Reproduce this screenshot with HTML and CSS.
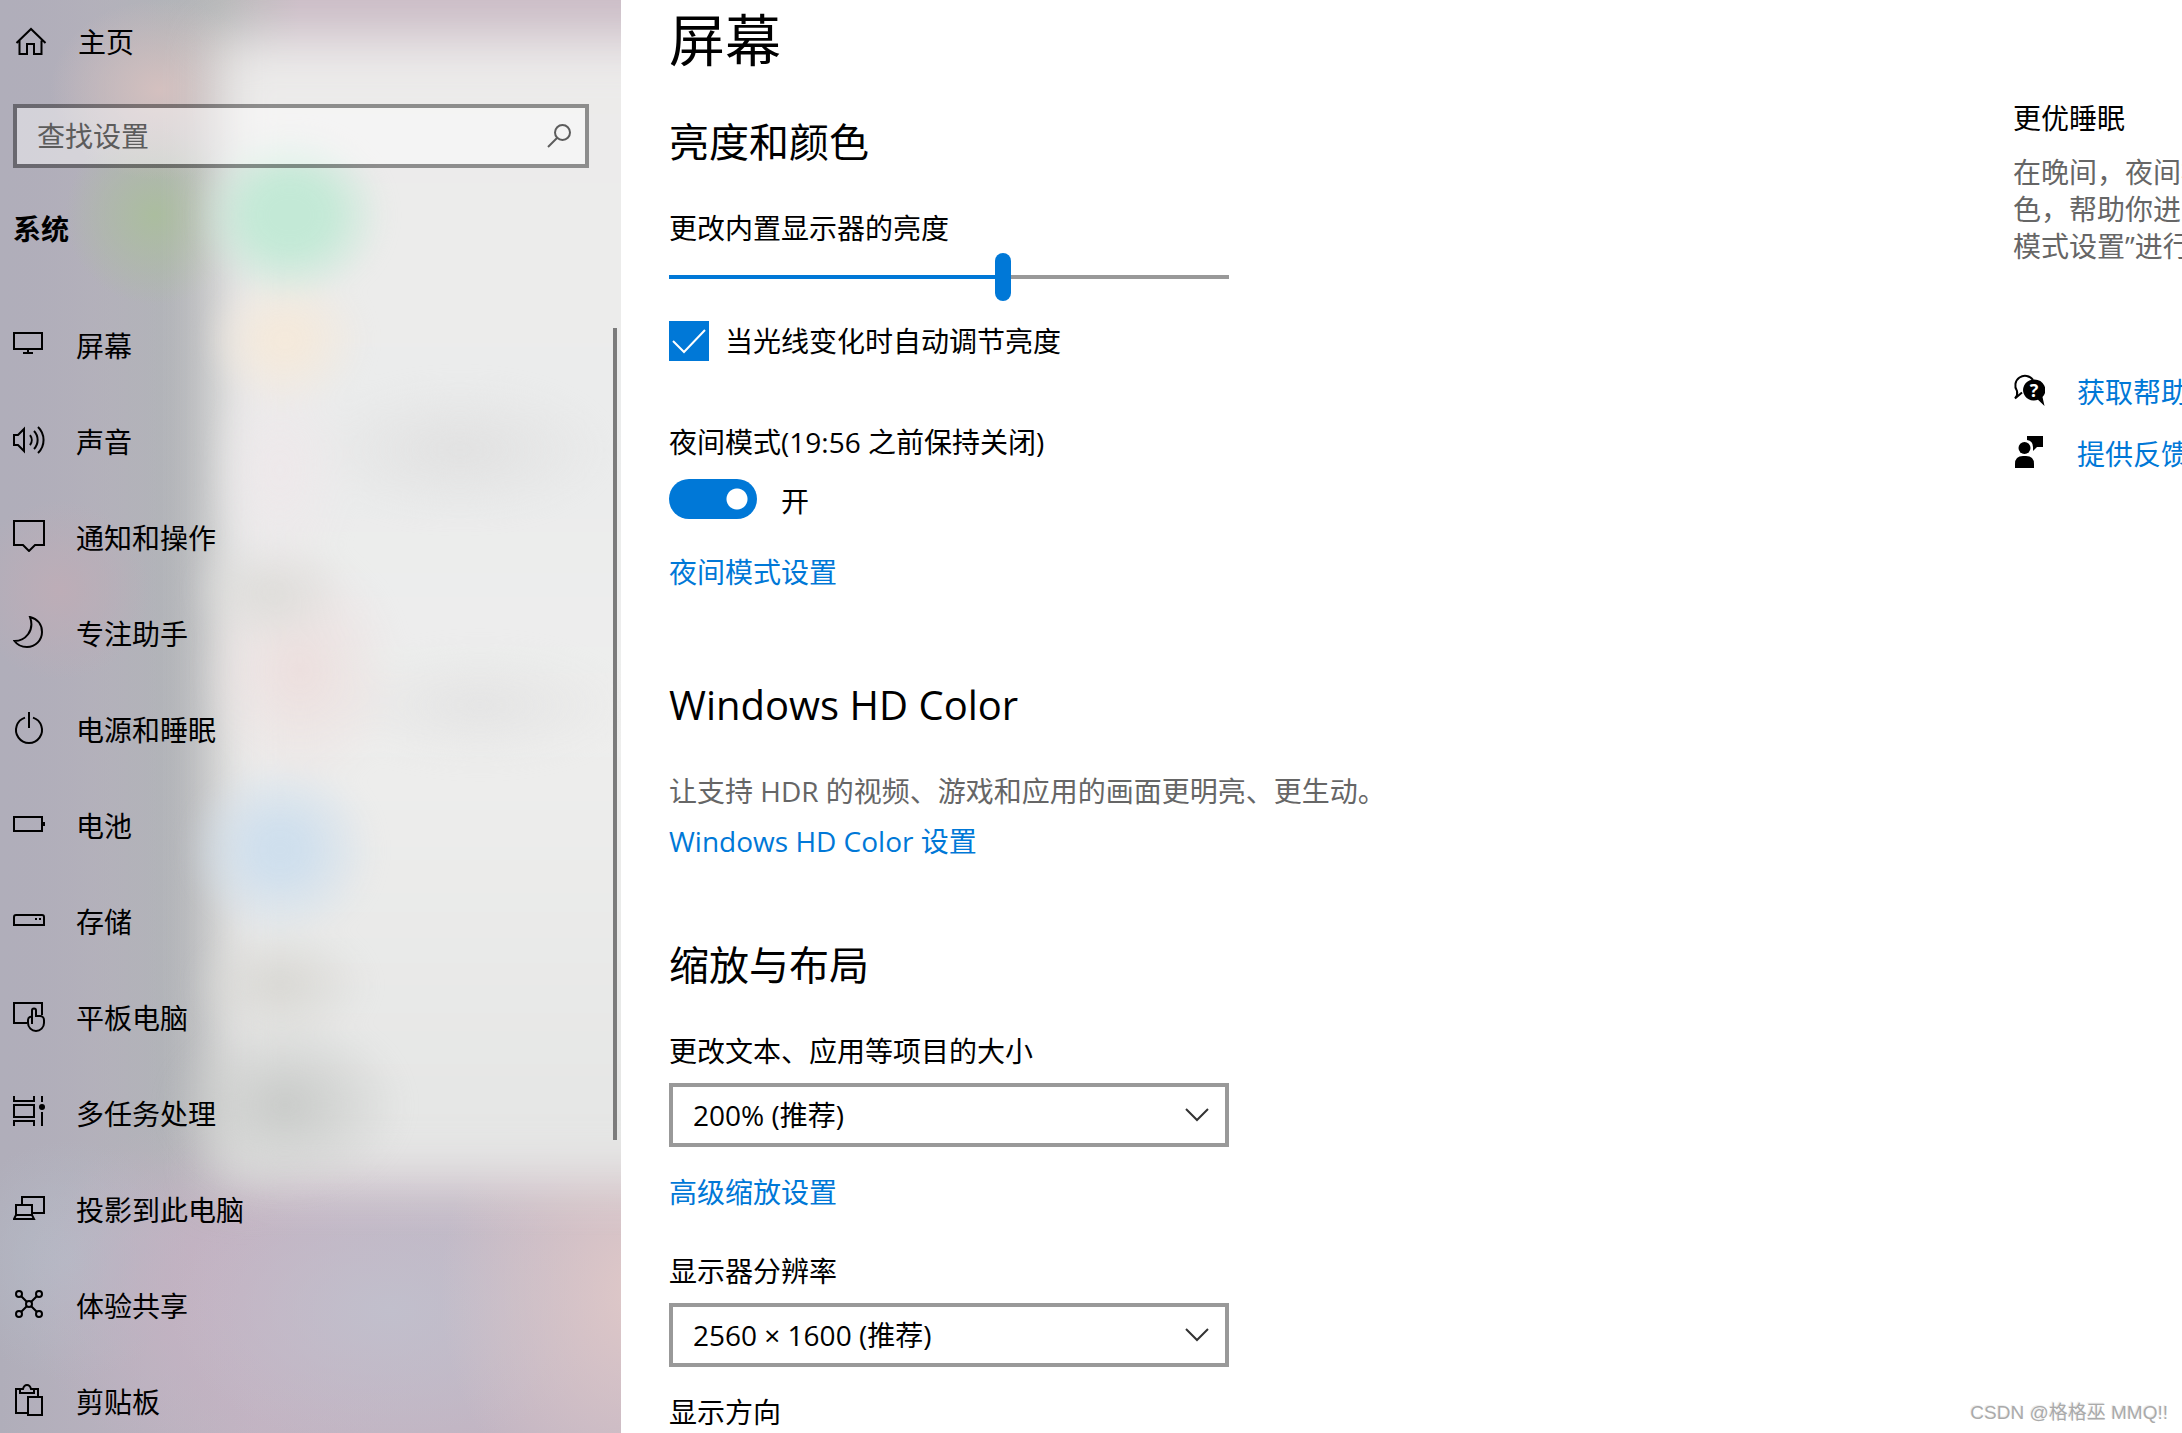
FILE: index.html
```html
<!DOCTYPE html>
<html lang="zh-CN">
<head>
  <meta charset="UTF-8" />
  <title>设置</title>
  <link rel="stylesheet" href="styles.css">
</head>
<body>

  <nav class="sidebar">
    <a class="home" href="#">
      <svg class="icon" viewBox="0 0 32 32"><path d="M1.5 17L16 3l14.5 14M4.5 14.500v13.500h7.500V18h7v10h7.500V14.500" /></svg>
      <span>主页</span>
    </a>

    <form class="search">
      <input type="text" placeholder="查找设置" aria-label="查找设置" />
      <button type="button" aria-label="搜索">
        <svg viewBox="0 0 24 24"><circle cx="15.500" cy="8.500" r="7.500" /><path d="M10 14L1 23" /></svg>
      </button>
    </form>

    <h2 class="category">系统</h2>

    <ul class="menu">
      <li><a href="#">
        <svg class="icon" viewBox="0 0 32 32"><path d="M1 5h28v16H1zM15 21v4M10 25h10" /></svg>
        <span>屏幕</span>
      </a></li>
      <li><a href="#">
        <svg class="icon" viewBox="0 0 32 32"><path d="M1 11h4l6-6v22l-6-6H1zM17 11a8 8 0 0 1 0 10M21 7a13 13 0 0 1 0 18M25 3a18 18 0 0 1 0 26" /></svg>
        <span>声音</span>
      </a></li>
      <li><a href="#">
        <svg class="icon" viewBox="0 0 32 32"><path d="M1 1h30v24h-9l-6 6-6-6H1z" /></svg>
        <span>通知和操作</span>
      </a></li>
      <li><a href="#">
        <svg class="icon" viewBox="0 0 32 32"><path d="M17 1C25 3 29 9 29 16a15 15 0 0 1-15 15C9 31 4 28.500 1.500 25C12 25 22 15 17 1z" /></svg>
        <span>专注助手</span>
      </a></li>
      <li><a href="#">
        <svg class="icon" viewBox="0 0 32 32"><path d="M12 5.600A13 13 0 1 0 20 5.600M16 0v16" /></svg>
        <span>电源和睡眠</span>
      </a></li>
      <li><a href="#">
        <svg class="icon" viewBox="0 0 32 32"><path d="M1 9h28v14H1zM31 14v4" /></svg>
        <span>电池</span>
      </a></li>
      <li><a href="#">
        <svg class="icon" viewBox="0 0 32 32"><path d="M1 21V13q0-2 2-2h26q2 0 2 2v8zM22 15h2M26 15h2" /></svg>
        <span>存储</span>
      </a></li>
      <li><a href="#">
        <svg class="icon" viewBox="0 0 32 32"><path d="M14 23H1V3h28v12M19 24V10.500a2 2 0 0 1 4 0V16h4a4 4 0 0 1 4 4v3a8 8 0 0 1-16 0v-3q0-3 4-3.500" /></svg>
        <span>平板电脑</span>
      </a></li>
      <li><a href="#">
        <svg class="icon" viewBox="0 0 32 32"><path d="M1 0v5h20V0M1 9h20v12H1zM1 30v-5h20v5M29 0v6M29 16v14" /><circle class="solid" cx="29" cy="11" r="3" /></svg>
        <span>多任务处理</span>
      </a></li>
      <li><a href="#">
        <svg class="icon" viewBox="0 0 32 32"><path d="M9 13V5h22v16H20M3 23V13h16v10M3 23h16l2 4H1z" /></svg>
        <span>投影到此电脑</span>
      </a></li>
      <li><a href="#">
        <svg class="icon" viewBox="0 0 32 32"><circle cx="6" cy="6" r="3" /><circle cx="26" cy="6" r="3" /><circle cx="16" cy="16" r="3" /><circle cx="6" cy="26" r="3" /><circle cx="26" cy="26" r="3" /><path d="M8 8l6 6M24 8l-6 6M8 24l6-6M24 24l-6-6" /></svg>
        <span>体验共享</span>
      </a></li>
      <li><a href="#">
        <svg class="icon" viewBox="0 0 32 32"><path d="M14 29H3V5h5M20 5h5v8M7 9V5h3q1-4 4-4t4 4h3v4zM15 13h14v18H15z" /></svg>
        <span>剪贴板</span>
      </a></li>
    </ul>

    <div class="scrollbar"></div>
  </nav>

  <main class="content">
    <h1>屏幕</h1>

    <section>
      <h2>亮度和颜色</h2>
      <label for="brillo">更改内置显示器的亮度</label>
      <input class="slider" type="range" id="brillo" min="0" max="100" value="60" />
      <label class="check"><input type="checkbox" checked /><span>当光线变化时自动调节亮度</span></label>
      <label for="noche">夜间模式(19:56 之前保持关闭)</label>
      <div class="switch"><input type="checkbox" role="switch" id="noche" checked /><span>开</span></div>
      <a href="#">夜间模式设置</a>
    </section>

    <section>
      <h2>Windows HD Color</h2>
      <p>让支持 HDR 的视频、游戏和应用的画面更明亮、更生动。</p>
      <a href="#">Windows HD Color 设置</a>
    </section>

    <section class="layout">
      <h2>缩放与布局</h2>
      <label for="escala">更改文本、应用等项目的大小</label>
      <select id="escala">
        <option>200% (推荐)</option>
      </select>
      <a href="#">高级缩放设置</a>
      <label for="resolucion">显示器分辨率</label>
      <select id="resolucion">
        <option>2560 × 1600 (推荐)</option>
      </select>
      <div class="orientation">显示方向</div>
    </section>
  </main>

  <aside class="related">
    <h3>更优睡眠</h3>
    <p>在晚间，夜间模<br>色，帮助你进入<br>模式设置”进行</p>
    <a href="#">
      <svg class="icon" viewBox="0 0 32 32">
        <path d="M9 18.500L2 24.500Q5 21 4 17A9.500 9.500 0 1 1 20 6" />
        <path class="solid" d="M21 5.500a11 10.500 0 1 0 4 20.300L31.500 32L29.500 23A11 10.500 0 0 0 21 5.500z" />
        <text x="21" y="23" text-anchor="middle">?</text>
      </svg>
      <span>获取帮助</span>
    </a>
    <a href="#">
      <svg class="icon" viewBox="0 0 32 32">
        <circle class="solid" cx="11.500" cy="12" r="6" />
        <path class="solid" d="M2 32v-4q0-8 8-8h3q8 0 8 8v4zM14 0h16v11h-6l-4 4v-4q0-6-6-7z" />
      </svg>
      <span>提供反馈</span>
    </a>
  </aside>

  <div class="watermark">CSDN @格格巫 MMQ!!</div>

</body>
</html>
```

FILE: styles.css
```css
* {
  box-sizing: border-box;
}
body {
  display: flex;
  height: 100vh;
  margin: 0;
  overflow: hidden;
  background: #fff;
  color: #000;
  font-family: 'Open Sans', 'Noto Sans CJK SC', sans-serif;
  font-size: 28px;
  line-height: 36px;
}
h1, h2, h3, p, ul {
  margin: 0;
  padding: 0;
  font-weight: normal;
}
a {
  color: #0078d7;
  text-decoration: none;
}
input, select, button {
  margin: 0;
  font: inherit;
  color: inherit;
}
.icon {
  flex: none;
  width: 32px;
  height: 32px;
  fill: none;
  stroke: #000;
  stroke-width: 2;
}
.icon .solid {
  fill: #000;
  stroke: none;
}
.icon text {
  fill: #fff;
  stroke: none;
  font-size: 18px;
  font-weight: bold;
}

/* Panel izquierdo */
.sidebar {
  position: relative;
  isolation: isolate;
  flex: none;
  width: 621px;
  overflow: hidden;
  background:
    radial-gradient(ellipse 200px 240px at 640px 1290px, #dfc8c8, transparent),
    radial-gradient(ellipse 220px 140px at 390px 1310px, #c1bfcc, transparent),
    radial-gradient(ellipse 220px 180px at 240px 1290px, #c4b2c2, transparent),
    radial-gradient(ellipse 120px 120px at 70px 1260px, #b4b9c5, transparent),
    radial-gradient(ellipse 90px 90px at 60px 590px, #bdadb7, transparent),
    radial-gradient(ellipse 110px 90px at 160px 90px, #d4c0bf, transparent),
    radial-gradient(ellipse 90px 90px at 155px 215px, #abbd9f, transparent),
    linear-gradient(to right, #b0aeba, transparent 260px),
    linear-gradient(transparent 1150px, #c2b7c5 1240px, #c2b5c3),
    linear-gradient(to right, #b2acba, #b9b5bc 90px, #b3b7b8 160px, #b9bab9 220px, #cbbcc6 300px);
}
/* Fondo translúcido: ventana clara difuminada y manchas de color */
.sidebar::before {
  content: '';
  position: absolute;
  z-index: -1;
  top: 36px;
  right: -80px;
  bottom: 250px;
  left: 215px;
  background: linear-gradient(#ecebea, #ebecec 40%, #eeeeed 60%, #e4e5e4);
  filter: blur(26px);
}
.sidebar::after {
  content: '';
  position: absolute;
  z-index: -1;
  inset: 0;
  background:
    radial-gradient(ellipse 95px 85px at 290px 215px, #c3e9d6 40%, transparent),
    radial-gradient(ellipse 80px 70px at 285px 340px, #f4e9db 20%, transparent),
    radial-gradient(ellipse 70px 120px at 280px 470px, #eee8ea, transparent),
    radial-gradient(ellipse 80px 60px at 270px 590px, #dddcd9, transparent),
    radial-gradient(ellipse 100px 120px at 300px 670px, #ecdedd, transparent),
    radial-gradient(ellipse 95px 90px at 280px 850px, #cfdfed 25%, transparent),
    radial-gradient(ellipse 90px 60px at 280px 985px, #d8d7d3, transparent),
    radial-gradient(ellipse 120px 90px at 285px 1105px, #c8cac8, transparent),
    radial-gradient(ellipse 150px 70px at 460px 450px, #e1e1e1, transparent),
    radial-gradient(ellipse 150px 60px at 480px 705px, #e4e4e4, transparent);
  filter: blur(10px);
}
.home,
.menu a {
  display: flex;
  align-items: center;
  gap: 31px;
  padding-left: 13px;
  color: #000;
}
.home {
  height: 84px;
  padding-left: 15px;
}
.search {
  display: flex;
  height: 64px;
  margin: 20px 32px 0 13px;
  border: 4px solid rgba(0, 0, 0, 0.4);
  background: rgba(255, 255, 255, 0.45);
  background-clip: padding-box;
}
.search input {
  flex: 1;
  min-width: 0;
  padding: 0 0 0 20px;
  border: none;
  outline: none;
  background: none;
}
.search input::placeholder {
  color: #5c5c5c;
}
.search button {
  display: flex;
  align-items: center;
  padding: 0 14px;
  border: none;
  background: none;
}
.search svg {
  width: 24px;
  height: 24px;
  fill: none;
  stroke: #5c5c5c;
  stroke-width: 2;
}
.category {
  margin: 43px 0 49px 13px;
  font-size: 28px;
  font-weight: bold;
}
.menu {
  list-style: none;
}
.menu a {
  height: 96px;
}
.menu span {
  padding-top: 4px;
}
.scrollbar {
  position: absolute;
  top: 328px;
  right: 4px;
  width: 4px;
  height: 812px;
  background: #7c7c7c;
}

/* Contenido principal */
.content {
  flex: 1;
  padding: 3px 0 0 48px;
}
.content h1 {
  margin-bottom: 41px;
  font-size: 56px;
  line-height: 72px;
}
.content h2 {
  margin-bottom: 42px;
  font-size: 40px;
  line-height: 52px;
}
.content section {
  display: flex;
  flex-direction: column;
  align-items: flex-start;
  margin-bottom: 80px;
}
.content section:first-of-type {
  margin-bottom: 89px;
}
.content p,
.related p {
  color: #666;
}
.content p {
  margin-bottom: 14px;
}
.slider {
  appearance: none;
  width: 560px;
  height: 48px;
  margin: 7px 0 20px;
  background: linear-gradient(to right, #0078d7 60%, #999 60%) center / 100% 4px no-repeat;
}
.slider::-webkit-slider-thumb {
  appearance: none;
  width: 16px;
  height: 48px;
  border-radius: 8px;
  background: #0078d7;
}
.check,
.switch {
  display: flex;
  align-items: center;
  height: 40px;
}
.check {
  gap: 16px;
  margin-bottom: 63px;
}
.check input {
  appearance: none;
  width: 40px;
  height: 40px;
  background: #0078d7 url("data:image/svg+xml,%3Csvg xmlns='http://www.w3.org/2000/svg' viewBox='0 0 40 40' fill='none' stroke='white' stroke-width='2'%3E%3Cpath d='M4 20l11 11L36 9'/%3E%3C/svg%3E");
}
.switch {
  gap: 24px;
  margin: 19px 0 35px;
}
.switch span {
  padding-top: 4px;
}
.switch input {
  appearance: none;
  width: 88px;
  height: 40px;
  border-radius: 20px;
  background: radial-gradient(circle at 68px 20px, #fff 10px, #0078d7 11px);
}
.layout select {
  appearance: none;
  width: 560px;
  height: 64px;
  margin: 14px 0 27px;
  padding: 0 20px;
  border: 4px solid #999;
  border-radius: 0;
  background: #fff url("data:image/svg+xml,%3Csvg xmlns='http://www.w3.org/2000/svg' viewBox='0 0 24 14' fill='none' stroke='%23333' stroke-width='2'%3E%3Cpath d='M1 1l11 11L23 1'/%3E%3C/svg%3E") right 16px center / 24px 14px no-repeat;
}
.layout a {
  margin-bottom: 43px;
}

/* Columna derecha */
.related {
  flex: none;
  width: 169px;
  padding-top: 100px;
  overflow: hidden;
  white-space: nowrap;
}
.related h3 {
  margin-bottom: 18px;
  font-size: 28px;
}
.related p {
  margin-bottom: 105px;
  line-height: 37px;
}
.related a {
  display: flex;
  align-items: center;
  gap: 32px;
  margin-bottom: 22px;
}
.related span {
  padding-top: 4px;
}
.watermark {
  position: absolute;
  right: 14px;
  bottom: 8px;
  color: #aaa;
  font-family: 'Liberation Sans', 'Noto Sans CJK SC', sans-serif;
  font-size: 19px;
  line-height: 24px;
  text-shadow: -1px -1px 0 #eee;
}
```
